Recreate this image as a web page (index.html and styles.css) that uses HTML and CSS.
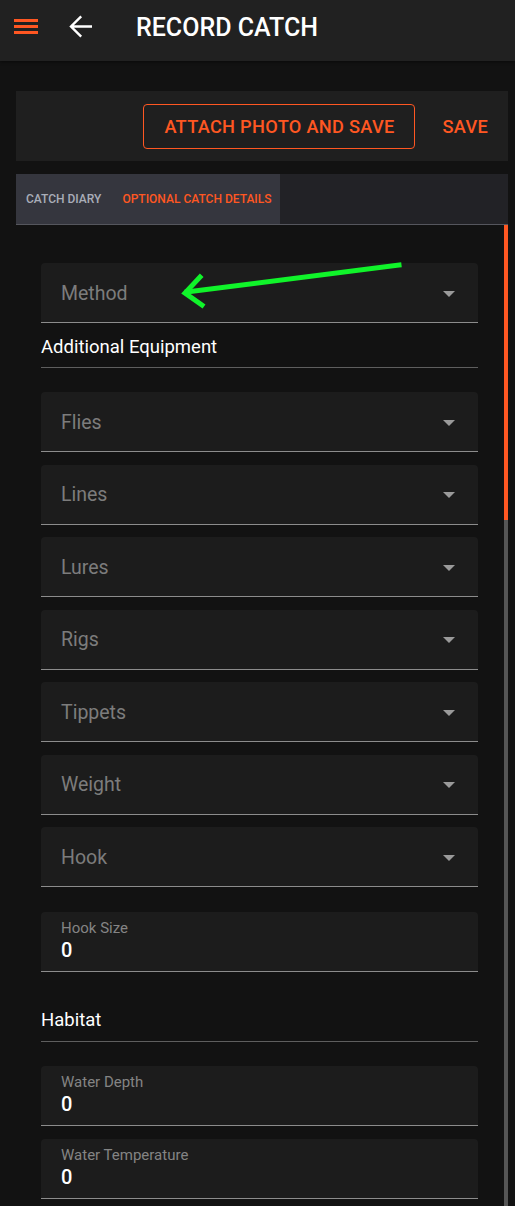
FILE: index.html
```html
<!DOCTYPE html>
<html>
<head>
<meta charset="utf-8">
<link rel="stylesheet" href="styles.css">
</head>
<body>
<header class="topbar">
  <svg class="menu-icon" width="24" height="15" viewBox="0 0 24 15"><rect x="0" y="0" width="24" height="3" fill="#ff5722"/><rect x="0" y="6" width="24" height="3" fill="#ff5722"/><rect x="0" y="12" width="24" height="3" fill="#ff5722"/></svg>
  <svg class="back-icon" width="24" height="24" viewBox="0 0 24 24"><path d="M23 12.5H2.5M12.2 2.3L2 12.5L12.2 22.7" fill="none" stroke="#fff" stroke-width="2.4"/></svg>
  <h1 class="title">RECORD CATCH</h1>
</header>
<main class="page">
  <div class="actions">
    <button class="btn-outline">ATTACH PHOTO AND SAVE</button>
    <button class="btn-text">SAVE</button>
  </div>
  <div class="tabs">
    <div class="tab-group">
      <span class="tab">CATCH DIARY</span>
      <span class="tab active">OPTIONAL CATCH DETAILS</span>
    </div>
  </div>
  <div class="scroller">
    <div class="content">
      <div class="select"><span class="placeholder">Method</span><span class="caret"></span></div>
      <div class="section">Additional Equipment</div>
      <div class="select"><span class="placeholder">Flies</span><span class="caret"></span></div>
      <div class="select"><span class="placeholder">Lines</span><span class="caret"></span></div>
      <div class="select"><span class="placeholder">Lures</span><span class="caret"></span></div>
      <div class="select"><span class="placeholder">Rigs</span><span class="caret"></span></div>
      <div class="select"><span class="placeholder">Tippets</span><span class="caret"></span></div>
      <div class="select"><span class="placeholder">Weight</span><span class="caret"></span></div>
      <div class="select"><span class="placeholder">Hook</span><span class="caret"></span></div>
      <div class="textfield textfield-first"><span class="label">Hook Size</span><span class="value">0</span></div>
      <div class="section section-habitat">Habitat</div>
      <div class="textfield"><span class="label">Water Depth</span><span class="value">0</span></div>
      <div class="textfield"><span class="label">Water Temperature</span><span class="value">0</span></div>
    </div>
    <div class="track"><div class="thumb"></div></div>
  </div>
</main>
<svg class="annotation" width="515" height="330" viewBox="0 0 515 330"><g stroke="#10f42a" stroke-width="5" stroke-linecap="square" fill="none"><path d="M399 265 L187 292"/><path d="M200 277 L185 293 L202 305"/></g></svg>
</body>
</html>
```
FILE: styles.css
```css
* { box-sizing: border-box; }
html, body { margin: 0; padding: 0; }
body {
  background: #121212;
  font-family: Roboto, "Liberation Sans", sans-serif;
  color: #fff;
  width: 515px;
  height: 1206px;
  overflow: hidden;
}
.topbar {
  height: 61px;
  background: #212121;
  display: flex;
  align-items: flex-start;
  padding-left: 14px;
  box-shadow: 0 1px 3px rgba(0,0,0,0.5);
}
.menu-icon { display: block; margin-top: 19px; }
.back-icon { display: block; margin: 14px 0 0 31px; }
.title {
  margin: 13px 0 0 43px;
  font-size: 25px;
  line-height: 30px;
  font-weight: 500;
}
.page { padding: 30px 7px 0 16px; }
.actions {
  height: 70px;
  background: #1f1f1f;
  display: flex;
  align-items: center;
  justify-content: flex-end;
  padding-right: 20px;
}
.btn-outline, .btn-text {
  font-family: Roboto, "Liberation Sans", sans-serif;
  font-weight: 500;
  font-size: 18.2px;
  color: #ff5722;
  background: transparent;
  letter-spacing: 0.3px;
  cursor: pointer;
}
.btn-outline {
  width: 272px;
  height: 45px;
  border: 1px solid #ff5722;
  border-radius: 4px;
  padding: 0;
  margin-right: 27px;
}
.btn-text { border: 0; padding: 0; }
.tabs {
  margin-top: 13px;
  height: 51px;
  background: #222226;
  border-bottom: 1px solid #55565d;
  display: flex;
}
.tab-group {
  width: 264px;
  background: #35363e;
  display: flex;
  align-items: center;
  padding-left: 10px;
  gap: 21px;
}
.tab {
  font-size: 12px;
  font-weight: 500;
  color: #a9adb8;
}
.tab.active { color: #ff5722; }
.scroller {
  display: flex;
  height: 982px;
}
.content {
  flex: 1;
  display: flex;
  flex-direction: column;
  padding: 38px 26px 0 25px;
}
.track {
  width: 4px;
  background: #555;
}
.thumb {
  height: 295px;
  background: #ff5722;
}
.select {
  flex: none;
  height: 60px;
  background: #1c1c1c;
  border-radius: 4px 4px 0 0;
  border-bottom: 1px solid #8c8c8c;
  display: flex;
  align-items: center;
  justify-content: space-between;
  padding: 0 23px 0 20px;
}
.select + .select { margin-top: 12.5px; }
.placeholder {
  font-size: 19.5px;
  color: #7c7c7c;
  margin-top: 1px;
}
.caret {
  width: 0;
  height: 0;
  border-left: 6px solid transparent;
  border-right: 6px solid transparent;
  border-top: 6px solid #9a9a9a;
  margin-top: 2px;
}
.section {
  flex: none;
  height: 45px;
  border-bottom: 1px solid #5e5e5e;
  font-size: 18.5px;
  line-height: 22px;
  font-weight: 400;
  color: #fff;
  padding-top: 13px;
  margin-bottom: 24px;
}
.section-habitat {
  height: 70px;
  padding-top: 37px;
}
.textfield {
  flex: none;
  height: 60px;
  background: #1c1c1c;
  border-radius: 4px 4px 0 0;
  border-bottom: 1px solid #8c8c8c;
  padding: 7px 20px 0 20px;
  display: flex;
  flex-direction: column;
}
.textfield-first { margin-top: 25px; }
.textfield + .textfield { margin-top: 13px; }
.label {
  font-size: 15px;
  color: #848484;
  line-height: 18px;
}
.value {
  font-size: 20px;
  font-weight: 500;
  color: #fff;
  line-height: 26px;
}
.annotation {
  position: absolute;
  left: 0;
  top: 0;
  pointer-events: none;
}
```
